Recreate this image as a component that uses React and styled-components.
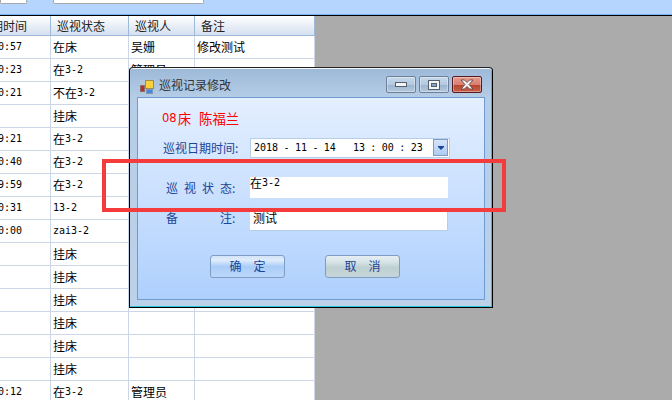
import React from "react";
import styled, { createGlobalStyle } from "styled-components";

const GlobalStyle = createGlobalStyle`
  html, body {
    margin: 0;
    padding: 0;
    background: #ababab;
  }
  * {
    box-sizing: border-box;
  }
`;

const Page = styled.div`
  position: relative;
  width: 672px;
  height: 400px;
  overflow: hidden;
  background: #ababab;
  font-family: "Noto Sans CJK SC", sans-serif;
  font-size: 12px;
  line-height: 16px;
  color: #000;
`;

const TopBar = styled.div`
  display: flex;
  height: 16px;
  background: #b5d5ff;
  border-bottom: 1px solid #000;
  box-shadow: inset 0 -1px 0 #7fb0ee;
`;

const TopField = styled.div`
  width: ${(p) => p.$w}px;
  margin-left: ${(p) => p.$ml}px;
  height: 4px;
  background: #fff;
  border: 1px solid #a9a9a9;
  border-top: 0;
  border-radius: 0 0 2px 2px;
`;

const Grid = styled.div`
  width: 315px;
`;

const Row = styled.div`
  display: grid;
  grid-template-columns: 51px 78px 66px 120px;
  height: ${(p) => (p.$head ? 20 : 23)}px;
  background: ${(p) =>
    p.$head ? "linear-gradient(#ffffff, #d3deef)" : "#ffffff"};
`;

const Cell = styled.div`
  display: flex;
  align-items: center;
  justify-content: ${(p) => (p.$end ? "flex-end" : "flex-start")};
  padding: ${(p) =>
    p.$end ? `0 ${p.$head ? 23 : 28}px 0 0` : `0 0 0 ${p.$head ? 6 : 2}px`};
  padding-top: ${(p) => (p.$head ? 1 : 0)}px;
  overflow: hidden;
  white-space: nowrap;
  border-right: 1px solid ${(p) => (p.$head ? "#9db9da" : "#cdd6e6")};
  border-bottom: 1px solid ${(p) => (p.$head ? "#9db9da" : "#cdd6e6")};
  color: ${(p) => (p.$head ? "#222" : "#000")};
`;

const Latin = styled.span`
  font-family: "DejaVu Sans Mono", monospace;
  font-size: 10px;
  word-spacing: 0;
`;

const DatePart = styled(Latin)`
  margin-left: ${(p) => p.$ml || 0}px;
  word-spacing: -0.6px;
`;

const Dialog = styled.div`
  position: absolute;
  left: 129px;
  top: 67px;
  width: 364px;
  height: 241px;
  display: flex;
  flex-direction: column;
  border: 1px solid #000;
  border-top-color: #222;
  border-radius: 4px 4px 0 0;
  background: linear-gradient(#9db9d8 0, #b5cde6 30px, #bcd2e9 100%);
  box-shadow: inset 0 1px 0 #f4f8fc, inset -1px -1px 0 #2bc6d8;
`;

const TitleBar = styled.div`
  display: flex;
  align-items: center;
  height: 29px;
  padding: 8px 10px 0 10px;
`;

const TitleText = styled.div`
  margin-left: 5px;
  color: #2c3440;
  transform: translateY(-2px);
`;

const WindowButtons = styled.div`
  display: flex;
  gap: 3px;
  margin-left: auto;
  transform: translateY(-2px);
`;

const WindowButton = styled.div`
  display: flex;
  align-items: center;
  justify-content: center;
  width: 30px;
  height: 17px;
  border: 1px solid ${(p) => (p.$close ? "#5a1a24" : "#6e8099")};
  border-radius: 2px;
  background: ${(p) =>
    p.$close
      ? "linear-gradient(#e59a8c 0, #d87f72 50%, #b6452c 52%, #c5604a 100%)"
      : "linear-gradient(#c6d8ea 0, #b4cae1 50%, #9bb4cf 52%, #b4c9de 100%)"};
  box-shadow: inset 0 0 0 1px rgba(255, 255, 255, 0.35);
`;

const Panel = styled.div`
  flex: 1;
  margin: 0 7px 7px 7px;
  padding: 11px 0 0 0;
  border: 1px solid #6f9bd2;
  background: linear-gradient(#e4efff, #aed0fd);
  color: #1b4596;
`;

const Patient = styled.div`
  margin-left: 24px;
  height: 18px;
  display: flex;
  align-items: center;
  color: #ff0000;
  font-size: 13.4px;
  white-space: pre;
`;

const PatientNum = styled.span`
  font-family: "DejaVu Sans", sans-serif;
  font-size: 11.5px;
  margin-right: 1px;
`;

const PatientName = styled.span`
  margin-left: 8px;
`;

const FormRow = styled.div`
  display: flex;
  align-items: center;
  height: ${(p) => p.$h}px;
  margin-top: ${(p) => p.$mt}px;
  margin-left: ${(p) => p.$ml}px;
`;

const Label = styled.div`
  width: ${(p) => p.$w}px;
  flex: none;
  white-space: pre;
  word-spacing: 3.3px;
  transform: translateY(${(p) => p.$dy || 0}px);
`;

const DateBox = styled.div`
  display: flex;
  align-items: center;
  width: 200px;
  height: 20px;
  padding: 0 1px 1px 3px;
  background: #fff;
  border: 1px solid #b7cde8;
  color: #000;
  white-space: pre;
`;

const DropButton = styled.div`
  display: flex;
  align-items: center;
  justify-content: center;
  width: 15px;
  height: 17px;
  margin-left: auto;
  background: linear-gradient(#d5e5fb, #aecbf3);
  border: 1px solid #7f9cc4;
`;

const TextBox = styled.div`
  display: flex;
  align-items: flex-start;
  width: 198px;
  height: ${(p) => p.$h}px;
  padding: ${(p) => p.$pt}px 0 0 ${(p) => p.$pl}px;
  line-height: 12px;
  background: #fff;
  color: #000;
  border-right: ${(p) => (p.$bordered ? "1px solid #b7cde8" : "0")};
  border-bottom: ${(p) => (p.$bordered ? "1px solid #b7cde8" : "0")};
`;

const Actions = styled.div`
  display: flex;
  gap: 40px;
  margin: 24px 0 0 72px;
`;

const ActionButton = styled.div`
  display: flex;
  align-items: center;
  justify-content: center;
  width: 75px;
  height: 23px;
  padding-bottom: 2px;
  white-space: pre;
  word-spacing: 3.3px;
  border: 1px solid #7f9cc4;
  border-radius: 3px;
  background: ${(p) =>
    p.$muted
      ? "linear-gradient(#e6eef3 0, #d5e2e6 30%, #bfd0d2 55%, #c6d6da 100%)"
      : "linear-gradient(#d3e3f8 0, #e0ecfb 20%, #a9cdf8 50%, #bcd8fb 100%)"};
  color: #1b4596;
`;

const Annotation = styled.div`
  position: absolute;
  left: 102px;
  top: 159px;
  width: 404px;
  height: 53px;
  border: 4px solid #f53c3c;
  pointer-events: none;
`;

const mixed = (text) =>
  text
    .split(/([\x20-\x7e]+)/)
    .filter(Boolean)
    .map((part, i) =>
      /^[\x20-\x7e]+$/.test(part) ? <Latin key={i}>{part}</Latin> : part
    );

const rows = [
  ["13:10:57", "在床", "吴姗", "修改测试"],
  ["13:00:23", "在3-2", "管理员", ""],
  ["13:00:21", "不在3-2", "", ""],
  ["", "挂床", "", ""],
  ["13:09:21", "在3-2", "", ""],
  ["13:0:40", "在3-2", "", ""],
  ["13:09:59", "在3-2", "", ""],
  ["13:00:31", "13-2", "", ""],
  ["13:00:00", "zai3-2", "", ""],
  ["", "挂床", "", ""],
  ["", "挂床", "", ""],
  ["", "挂床", "", ""],
  ["", "挂床", "", ""],
  ["", "挂床", "", ""],
  ["", "挂床", "", ""],
  ["13:00:12", "在3-2", "管理员", ""],
];

const AppIcon = () => (
  <svg width="14" height="14" viewBox="0 0 14 14">
    <rect x="0" y="0" width="14" height="14" fill="#b4c6da" />
    <rect x="0.5" y="5.5" width="4" height="6" fill="#c0282a" stroke="#8c6f70" />
    <rect x="5.5" y="0.5" width="8" height="8" fill="#f8cf3c" stroke="#a08c50" />
    <rect x="6.5" y="9.5" width="6" height="4" fill="#4a86d8" stroke="#7d98bd" />
  </svg>
);

const MinIcon = () => (
  <svg width="12" height="6" viewBox="0 0 12 6">
    <rect x="0.5" y="0.5" width="11" height="4" fill="#f2f4f6" stroke="#56606e" />
  </svg>
);

const MaxIcon = () => (
  <svg width="12" height="10" viewBox="0 0 12 10">
    <rect x="0.5" y="0.5" width="11" height="9" fill="#f2f4f6" stroke="#56606e" />
    <rect x="3.5" y="3.5" width="5" height="3" fill="#8aa2bc" stroke="#56606e" />
  </svg>
);

const CloseIcon = () => (
  <svg width="14" height="11" viewBox="0 0 14 11">
    <path
      d="M1 1h3.500L7 3.500 9.500 1H13L9 5.500 13 10H9.500L7 7.500 4.500 10H1L5 5.500Z"
      fill="#f2f2f2"
      stroke="#5a3a3e"
      strokeWidth="0.8"
    />
  </svg>
);

const ArrowIcon = () => (
  <svg width="6" height="4" viewBox="0 0 6 4">
    <path d="M0 0h6v1L3 4 0 1Z" fill="#1b4596" />
  </svg>
);

export default function App() {
  return (
    <Page>
      <GlobalStyle />
      <TopBar>
        <TopField $w={27} $ml={0} />
        <TopField $w={151} $ml={26} />
      </TopBar>
      <Grid>
        <Row $head>
          <Cell $head $end>巡视日期时间</Cell>
          <Cell $head>巡视状态</Cell>
          <Cell $head>巡视人</Cell>
          <Cell $head>备注</Cell>
        </Row>
        {rows.map((r, i) => (
          <Row key={i}>
            <Cell $end>{mixed(r[0])}</Cell>
            <Cell>{mixed(r[1])}</Cell>
            <Cell>{r[2]}</Cell>
            <Cell>{r[3]}</Cell>
          </Row>
        ))}
      </Grid>

      <Dialog>
        <TitleBar>
          <AppIcon />
          <TitleText>巡视记录修改</TitleText>
          <WindowButtons>
            <WindowButton><MinIcon /></WindowButton>
            <WindowButton><MaxIcon /></WindowButton>
            <WindowButton $close><CloseIcon /></WindowButton>
          </WindowButtons>
        </TitleBar>
        <Panel>
          <Patient>
            <PatientNum>08</PatientNum>床<PatientName>陈福兰</PatientName>
          </Patient>
          <FormRow $h={20} $mt={11} $ml={25}>
            <Label $w={87}>巡视日期时间:</Label>
            <DateBox>
              <DatePart>2018 - 11 - 14</DatePart>
              <DatePart $ml={17}>13 : 00 : 23</DatePart>
              <DropButton><ArrowIcon /></DropButton>
            </DateBox>
          </FormRow>
          <FormRow $h={21} $mt={19} $ml={28}>
            <Label $w={84}>巡 视 状 态:</Label>
            <TextBox $h={21} $pt={0} $pl={0}>{mixed("在3-2")}</TextBox>
          </FormRow>
          <FormRow $h={22} $mt={11} $ml={28}>
            <Label $w={84} $dy={-2}>备       注:</Label>
            <TextBox $h={22} $pt={3} $pl={3} $bordered>测试</TextBox>
          </FormRow>
          <Actions>
            <ActionButton>确  定</ActionButton>
            <ActionButton $muted>取  消</ActionButton>
          </Actions>
        </Panel>
      </Dialog>

      <Annotation />
    </Page>
  );
}
